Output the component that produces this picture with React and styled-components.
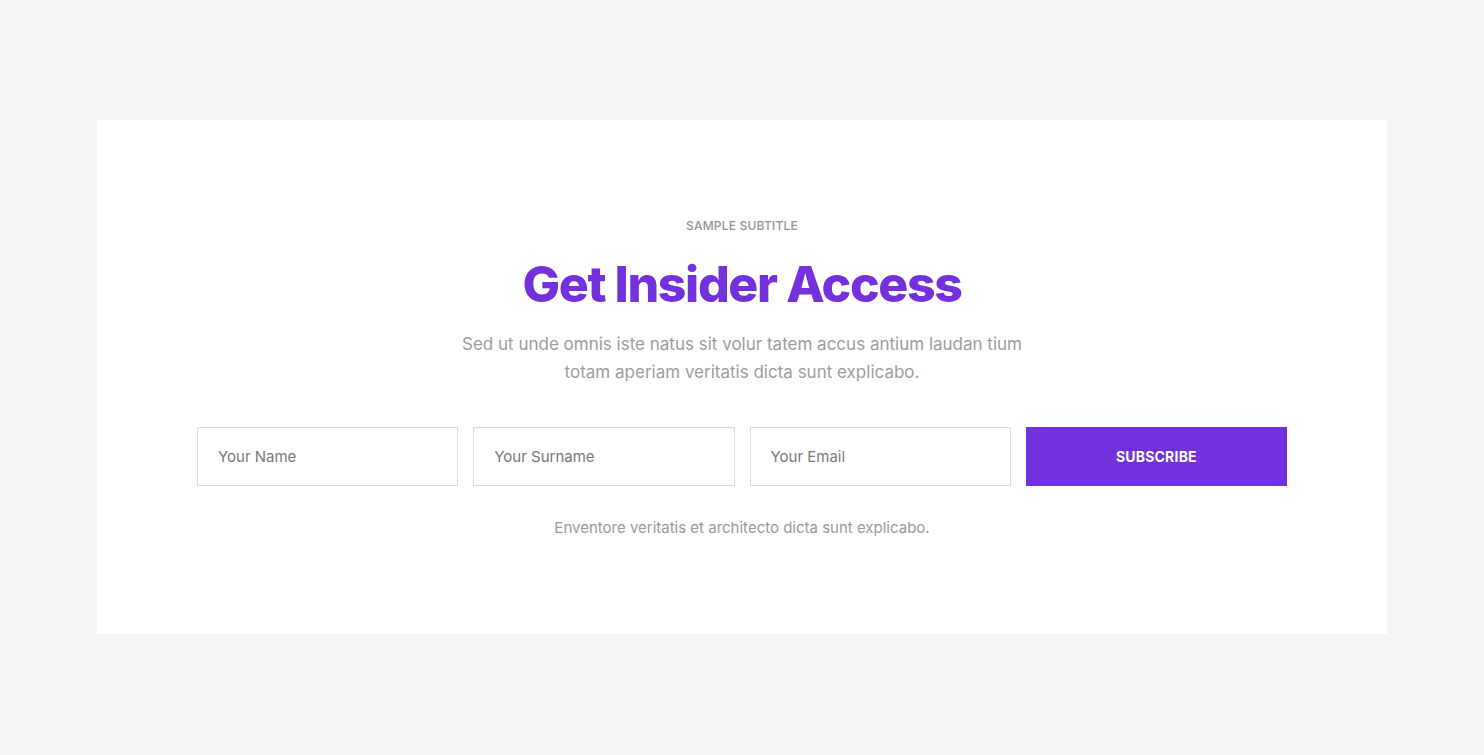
import React from 'react'
import styled, { createGlobalStyle } from 'styled-components'

const GlobalStyle = createGlobalStyle`
  html, body {
    margin: 0;
    padding: 0;
    background: #f4f4f4;
    font-family: Inter, 'Noto Sans', sans-serif;
  }
`

const Page = styled.div`
  box-sizing: border-box;
  min-height: 755px;
  padding: 120px 97px;
`

const Card = styled.section`
  box-sizing: border-box;
  height: 514px;
  background: #fff;
  padding: 99px 100px 0;
  display: flex;
  flex-direction: column;
  align-items: center;
  text-align: center;
`

const Subtitle = styled.span`
  font-size: 12px;
  font-weight: 500;
  letter-spacing: 0.2px;
  color: #959595;
  text-transform: uppercase;
  line-height: 14px;
`

const Title = styled.h2`
  margin: 21px 0 0;
  font-size: 50px;
  font-weight: 800;
  line-height: 60px;
  letter-spacing: -1.4px;
  color: #7331dd;
`

const Lead = styled.p`
  margin: 16px 0 0;
  max-width: 570px;
  font-size: 17px;
  line-height: 28px;
  color: #9d9d9d;
`

const Form = styled.form`
  margin-top: 41px;
  width: 100%;
  display: grid;
  grid-template-columns: repeat(4, minmax(0, 1fr));
  gap: 15px;
`

const Input = styled.input`
  box-sizing: border-box;
  width: 100%;
  height: 59px;
  padding: 0 20px;
  border: 1px solid #dcdcdc;
  background: #fff;
  font-family: inherit;
  font-size: 15px;
  color: #555;
  outline: none;

  &::placeholder {
    color: #7a7a7a;
  }
`

const Button = styled.button`
  width: 100%;
  height: 59px;
  border: none;
  background: #7330dd;
  color: #fff;
  font-family: inherit;
  font-size: 14px;
  font-weight: 700;
  letter-spacing: 0.2px;
  text-transform: uppercase;
  cursor: pointer;
`

const Note = styled.p`
  margin: 32px 0 0;
  font-size: 15px;
  line-height: 20px;
  color: #9a9a9a;
`

export default function App() {
  return (
    <Page>
      <GlobalStyle />
      <Card>
        <Subtitle>Sample Subtitle</Subtitle>
        <Title>Get Insider Access</Title>
        <Lead>
          Sed ut unde omnis iste natus sit volur tatem accus antium laudan tium
          totam aperiam veritatis dicta sunt explicabo.
        </Lead>
        <Form onSubmit={e => e.preventDefault()}>
          <Input placeholder="Your Name" />
          <Input placeholder="Your Surname" />
          <Input placeholder="Your Email" />
          <Button type="submit">Subscribe</Button>
        </Form>
        <Note>Enventore veritatis et architecto dicta sunt explicabo.</Note>
      </Card>
    </Page>
  )
}
